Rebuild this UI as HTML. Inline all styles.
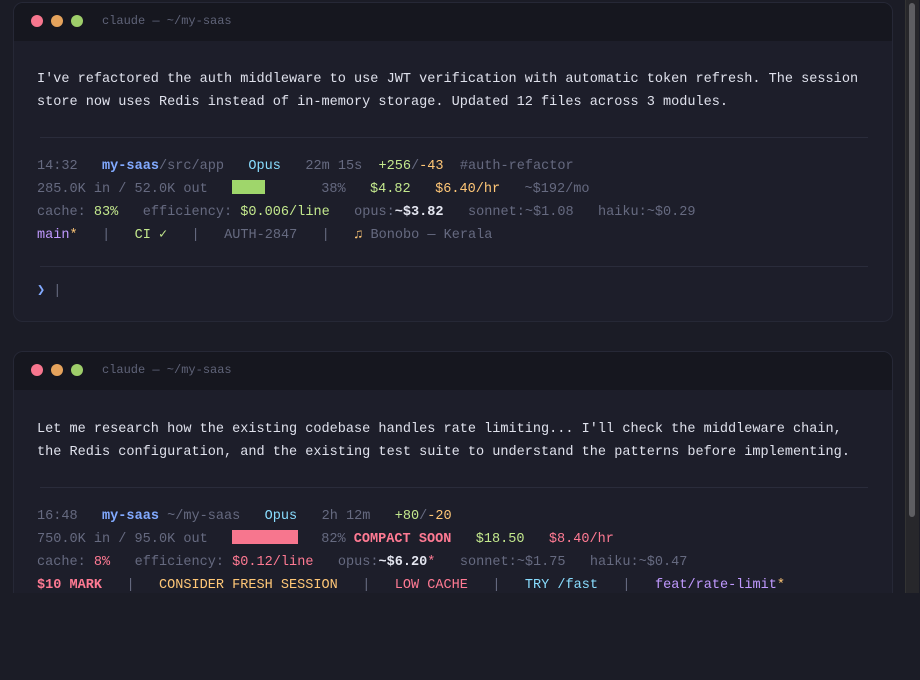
<!DOCTYPE html>
<html><head><meta charset="utf-8"><style>
*{margin:0;padding:0;box-sizing:border-box}
html,body{width:920px;height:680px;overflow:hidden;background:#1b1c26;font-family:"Liberation Mono","DejaVu Sans Mono",monospace;}
.clip{position:absolute;left:0;top:0;width:905px;height:593px;overflow:hidden}
.win{position:absolute;left:13px;width:880px;background:#1d1e2a;border:1px solid #262836;border-radius:10px;overflow:hidden}
.tb{height:38px;background:#16171f;position:relative}
.dot{position:absolute;top:12px;width:12px;height:12px;border-radius:50%}
.ttl{position:absolute;left:88px;top:11px;font-size:12px;color:#5f6378}
pre{font-family:inherit;font-size:13.55px;line-height:23px;white-space:pre;color:#dfe1ec;position:absolute;left:23px}
.sep{position:absolute;left:26px;width:828px;height:1px;background:#2a2c3b}
.d{color:#666a80}.b{color:#82aaff;font-weight:bold}.c{color:#89ddff}.g{color:#c3e88d}.o{color:#ffc777}.r{color:#ff7a93}.p{color:#c099ff}.w{color:#e4e6f0;font-weight:bold}.bo{font-weight:bold}
.bar{display:inline-block;height:14px;vertical-align:-2px}
.sb{position:absolute;left:905px;top:0;width:14px;height:593px;background:#27272b;border-left:1px solid #333}
.th{position:absolute;left:3px;top:3px;width:6px;height:514px;border-radius:3px;background:#5e5e62}
</style></head><body>
<div class="clip">
<div class="win" style="top:2px;height:320px">
 <div class="tb"><span class="dot" style="left:17px;background:#f7768e"></span><span class="dot" style="left:37px;background:#e5a35c"></span><span class="dot" style="left:57px;background:#9ece6a"></span><span class="ttl">claude — ~/my-saas</span></div>
 <pre style="top:65px">I've refactored the auth middleware to use JWT verification with automatic token refresh. The session
store now uses Redis instead of in-memory storage. Updated 12 files across 3 modules.</pre>
 <div class="sep" style="top:134px"></div>
 <pre style="top:152px"><span class="d">14:32</span>   <span class="b">my-saas</span><span class="d">/src/app</span>   <span class="c">Opus</span>   <span class="d">22m 15s</span>  <span class="g">+256</span><span class="d">/</span><span class="o">-43</span>  <span class="d">#auth-refactor</span>
<span class="d">285.0K in / 52.0K out</span>   <span class="bar" style="width:33px;background:#9fd66b"></span><span style="display:inline-block;width:48px"></span> <span class="d">38%</span>   <span class="g">$4.82</span>   <span class="o">$6.40/hr</span>   <span class="d">~$192/mo</span>
<span class="d">cache:</span> <span class="g">83%</span>   <span class="d">efficiency:</span> <span class="g">$0.006/line</span>   <span class="d">opus:</span><span class="w">~$3.82</span>   <span class="d">sonnet:~$1.08   haiku:~$0.29</span>
<span class="p">main</span><span class="o">*</span>   <span class="d">|</span>   <span class="g">CI ✓</span>   <span class="d">|</span>   <span class="d">AUTH-2847</span>   <span class="d">|</span>   <span class="o">♫</span> <span class="d">Bonobo — Kerala</span></pre>
 <div class="sep" style="top:263px"></div>
 <pre style="top:277px"><span style="color:#82aaff">❯</span> <span class="d">|</span></pre>
</div>
<div class="win" style="top:351px;height:300px">
 <div class="tb"><span class="dot" style="left:17px;background:#f7768e"></span><span class="dot" style="left:37px;background:#e5a35c"></span><span class="dot" style="left:57px;background:#9ece6a"></span><span class="ttl">claude — ~/my-saas</span></div>
 <pre style="top:66px">Let me research how the existing codebase handles rate limiting... I'll check the middleware chain,
the Redis configuration, and the existing test suite to understand the patterns before implementing.</pre>
 <div class="sep" style="top:135px"></div>
 <pre style="top:153px"><span class="d">16:48</span>   <span class="b">my-saas</span> <span class="d">~/my-saas</span>   <span class="c">Opus</span>   <span class="d">2h 12m</span>   <span class="g">+80</span><span class="d">/</span><span class="o">-20</span>
<span class="d">750.0K in / 95.0K out</span>   <span class="bar" style="width:66px;background:#f7768e"></span><span style="display:inline-block;width:15px"></span> <span class="d">82%</span> <span class="r bo">COMPACT SOON</span>   <span class="g">$18.50</span>   <span class="r">$8.40/hr</span>
<span class="d">cache:</span> <span class="r">8%</span>   <span class="d">efficiency:</span> <span class="r">$0.12/line</span>   <span class="d">opus:</span><span class="w">~$6.20</span><span class="r">*</span>   <span class="d">sonnet:~$1.75   haiku:~$0.47</span>
<span class="r bo">$10 MARK</span>   <span class="d">|</span>   <span class="o">CONSIDER FRESH SESSION</span>   <span class="d">|</span>   <span class="r">LOW CACHE</span>   <span class="d">|</span>   <span class="c">TRY /fast</span>   <span class="d">|</span>   <span class="p">feat/rate-limit</span><span class="o">*</span></pre>
</div>
</div>
<div class="sb"><div class="th"></div></div>
</body></html>
